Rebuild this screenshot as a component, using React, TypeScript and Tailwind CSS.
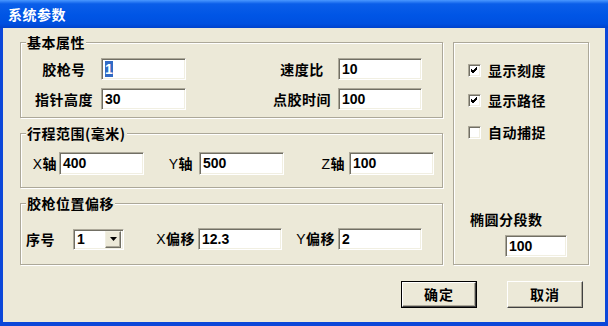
import type { ReactNode } from "react";

const cjk = "font-['Noto_Sans_CJK_SC','Noto_Sans',sans-serif]";

function Field({ value, w, selected }: { value: string; w: string; selected?: boolean }) {
  return (
    <div
      className={`${w} h-full flex items-center bg-white border border-t-[#aca899] border-l-[#aca899] border-b-white border-r-white shadow-[inset_1px_1px_0_#716f64,inset_-1px_-1px_0_#f1efe2] pl-[3px] font-['Liberation_Sans',Arial,sans-serif] font-bold text-[14px] text-black`}
    >
      {selected ? <span className="bg-[#316ac5] text-white leading-[16px]">{value}</span> : value}
    </div>
  );
}

function Group({ title, className, children }: { title: string; className: string; children: ReactNode }) {
  return (
    <fieldset
      className={`border border-[#aca899] shadow-[inset_1px_1px_0_#fff,1px_1px_0_#fff] ${className}`}
    >
      <legend className="ml-[5px] px-[1px] bg-[#ece9d8] h-[18px] leading-[18px] font-bold text-[14px] tracking-[0.5px]">
        {title}
      </legend>
      {children}
    </fieldset>
  );
}

function Check({ label, checked }: { label: string; checked?: boolean }) {
  return (
    <div className="flex items-center h-[20px] pl-[14px]">
      <div className="w-[13px] h-[13px] bg-white border border-t-[#aca899] border-l-[#aca899] border-b-white border-r-white shadow-[inset_1px_1px_0_#716f64,inset_-1px_-1px_0_#f1efe2] flex items-center justify-center">
        {checked && (
          <svg width="7" height="7" viewBox="0 0 7 7">
            <path d="M0 2 L2 4 L6 0 M0 3 L2 5 L6 1 M0 4 L2 6 L6 2" stroke="#000" strokeWidth="1" fill="none" />
          </svg>
        )}
      </div>
      <span className="ml-[7px] font-bold text-[14px] tracking-[0.5px]">{label}</span>
    </div>
  );
}

function Btn({ label, def }: { label: string; def?: boolean }) {
  return (
    <div className={`w-[76px] h-[27px] ${def ? "border border-black" : ""}`}>
      <div className="w-full h-full flex items-center justify-center bg-[#ece9d8] border border-t-white border-l-white border-b-[#404040] border-r-[#404040] shadow-[inset_-1px_-1px_0_#aca899] font-bold text-[14px] tracking-[1px]">
        {label}
      </div>
    </div>
  );
}

function Axis({ letter, rest, w }: { letter: string; rest: string; w: string }) {
  return (
    <span className={`${w} text-right text-[14px] tracking-[0.5px]`}>
      <span className="font-['Liberation_Sans',Arial,sans-serif] font-normal">{letter}</span>
      <span className="font-bold">{rest}</span>
    </span>
  );
}

export default function App() {
  return (
    <div className={`w-[608px] h-[326px] flex flex-col bg-[#0b47d9] text-black ${cjk}`}>
      <div className="h-[28px] shrink-0 flex items-center pl-[8px] bg-[linear-gradient(to_bottom,#4a98ff_0%,#0a5ee9_14%,#0055e5_55%,#0050e0_85%,#0042cc_100%)] text-white font-bold text-[14px] tracking-[0.5px]">
        系统参数
      </div>
      <div className="flex-1 mx-[3px] mb-[4px] bg-[#ece9d8] flex flex-col pl-[17px] pr-[16px] pt-[5px]">
        <div className="flex gap-[10px]">
          <div className="w-[423px] flex flex-col gap-[6px]">
            <Group title="基本属性" className="pt-[7px] pb-[7px]">
              <div className="flex flex-col gap-[8px]">
                <div className="flex items-center h-[22px]">
                  <span className="ml-[9px] w-[68px] text-center font-bold text-[14px] tracking-[0.5px]">胶枪号</span>
                  <div className="ml-[3px] h-full">
                    <Field value="1" w="w-[85px]" selected />
                  </div>
                  <span className="ml-[84px] w-[64px] text-center font-bold text-[14px] tracking-[0.5px]">速度比</span>
                  <div className="ml-[4px] h-full">
                    <Field value="10" w="w-[84px]" />
                  </div>
                </div>
                <div className="flex items-center h-[22px]">
                  <span className="ml-[9px] w-[68px] text-center font-bold text-[14px] tracking-[0.5px]">指针高度</span>
                  <div className="ml-[3px] h-full">
                    <Field value="30" w="w-[85px]" />
                  </div>
                  <span className="ml-[84px] w-[64px] text-center font-bold text-[14px] tracking-[0.5px]">点胶时间</span>
                  <div className="ml-[4px] h-full">
                    <Field value="100" w="w-[84px]" />
                  </div>
                </div>
              </div>
            </Group>
            <Group title="行程范围(毫米)" className="pt-[10px] pb-[12px]">
              <div className="flex items-center h-[23px]">
                <Axis letter="X" rest="轴" w="w-[36px]" />
                <div className="ml-[2px] h-full">
                  <Field value="400" w="w-[85px]" />
                </div>
                <Axis letter="Y" rest="轴" w="w-[49px]" />
                <div className="ml-[6px] h-full">
                  <Field value="500" w="w-[85px]" />
                </div>
                <Axis letter="Z" rest="轴" w="w-[61px]" />
                <div className="ml-[4px] h-full">
                  <Field value="100" w="w-[85px]" />
                </div>
              </div>
            </Group>
            <Group title="胶枪位置偏移" className="pt-[16px] pb-[14px]">
              <div className="flex items-center h-[22px]">
                <span className="w-[34px] text-right font-bold text-[14px] tracking-[0.5px]">序号</span>
                <div className="ml-[18px] w-[51px] h-[21px] flex items-center bg-white border border-t-[#aca899] border-l-[#aca899] border-b-white border-r-white shadow-[inset_1px_1px_0_#716f64,inset_-1px_-1px_0_#f1efe2] pl-[3px] pr-[2px] font-['Liberation_Sans',Arial,sans-serif] font-bold text-[14px]">
                  <span className="flex-1">1</span>
                  <div className="w-[16px] h-[17px] flex items-center justify-center bg-[#ece9d8] border border-t-[#f1efe2] border-l-[#f1efe2] border-b-[#716f64] border-r-[#716f64] shadow-[inset_-1px_-1px_0_#aca899]">
                    <svg width="7" height="4" viewBox="0 0 7 4">
                      <path d="M0 0 H7 L3.5 4 Z" fill="#000" />
                    </svg>
                  </div>
                </div>
                <Axis letter="X" rest="偏移" w="w-[71px]" />
                <div className="ml-[3px] h-full">
                  <Field value="12.3" w="w-[84px]" />
                </div>
                <Axis letter="Y" rest="偏移" w="w-[53px]" />
                <div className="ml-[3px] h-full">
                  <Field value="2" w="w-[84px]" />
                </div>
              </div>
            </Group>
          </div>
          <div className="w-[136px] h-[223px] mt-[9px] border border-[#aca899] shadow-[inset_1px_1px_0_#fff,1px_1px_0_#fff] flex flex-col pt-[17px]">
            <Check label="显示刻度" checked />
            <div className="mt-[10px]">
              <Check label="显示路径" checked />
            </div>
            <div className="mt-[12px]">
              <Check label="自动捕捉" />
            </div>
            <span className="mt-[68px] ml-[16px] h-[18px] leading-[18px] font-bold text-[14px] tracking-[0.5px]">椭圆分段数</span>
            <div className="mt-[7px] ml-[51px] h-[22px]">
              <Field value="100" w="w-[62px]" />
            </div>
          </div>
        </div>
        <div className="flex justify-end gap-[30px] mt-[16px] pr-[6px]">
          <Btn label="确定" def />
          <Btn label="取消" />
        </div>
      </div>
    </div>
  );
}
